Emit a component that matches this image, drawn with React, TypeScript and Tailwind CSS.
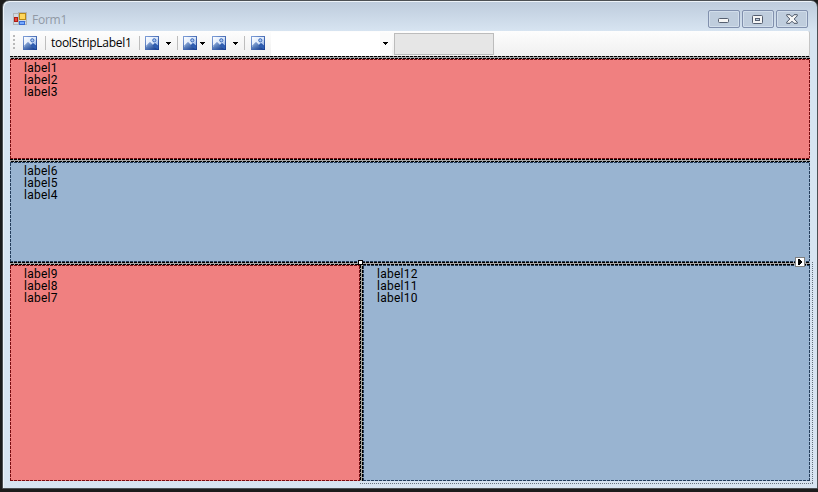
import React from "react";

const H_DASH = "h-px shrink-0 bg-[repeating-linear-gradient(90deg,var(--dash)_0_3px,transparent_3px_4px)]";
const V_DASH = "w-px shrink-0 bg-[repeating-linear-gradient(180deg,var(--dash)_0_3px,transparent_3px_4px)]";
const RED = "bg-[#f08080] [--dash:#780c10]";
const BLUE = "bg-[#99b4d1] [--dash:#243d5b]";

function PictureIcon() {
  return (
    <svg width="14" height="14" viewBox="0 0 14 14" className="mb-px shrink-0">
      <defs>
        <linearGradient id="sky" x1="0" y1="0" x2="1" y2="1">
          <stop offset="0" stopColor="#fff" />
          <stop offset=".5" stopColor="#dbe8fb" />
          <stop offset="1" stopColor="#5f8cd6" />
        </linearGradient>
        <linearGradient id="hill" x1="0" y1="0" x2="1" y2="1">
          <stop offset="0" stopColor="#8fb2e0" />
          <stop offset="1" stopColor="#123a8c" />
        </linearGradient>
        <linearGradient id="frame" x1="0" y1="0" x2="1" y2="1">
          <stop offset="0" stopColor="#7f9fd8" />
          <stop offset="1" stopColor="#173f94" />
        </linearGradient>
      </defs>
      <rect x=".5" y=".5" width="13" height="13" fill="url(#sky)" stroke="url(#frame)" />
      <path d="M7 10l3-3 3 3v3H6z" fill="#2f5fb4" />
      <path d="M1 11l4-4 7 6H1z" fill="url(#hill)" />
      <path d="M1 10.5l4-4 4.5 4.500M8 9.500l2-1.800 3 2.300" fill="none" stroke="#2c56a6" strokeWidth=".8" />
      <circle cx="9.3" cy="4.3" r="1.6" fill="#a9c6f2" stroke="#3c69b8" />
    </svg>
  );
}

function Arrow({ className = "" }: { className?: string }) {
  return (
    <svg width="5" height="3" viewBox="0 0 5 3" shapeRendering="crispEdges" className={"shrink-0 " + className}>
      <path d="M0 0h5v1H0zM1 1h3v1H1zM2 2h1v1H2z" />
    </svg>
  );
}

function Separator({ className = "" }: { className?: string }) {
  return <div className={"mb-px h-[14px] w-px shrink-0 bg-[#bdbdbd] " + className} />;
}

function Panel({ tone, labels, className = "" }: { tone: string; labels: string[]; className?: string }) {
  return (
    <div className={"flex min-w-0 flex-col " + tone + " " + className}>
      <div className={H_DASH} />
      <div className="flex min-h-0 grow">
        <div className={V_DASH} />
        <div className="grow pl-[13px] pt-[2px] font-['Roboto',sans-serif] text-[12px] leading-[12px] tracking-[0.25px] text-black">
          {labels.map((l) => <div key={l}>{l}</div>)}
        </div>
        <div className={V_DASH} />
      </div>
      <div className={H_DASH} />
    </div>
  );
}

function HatchLine() {
  return (
    <div className="h-[3px] shrink-0 bg-[#a8a8aa]">
      <div className="h-px bg-[repeating-linear-gradient(90deg,#000_0_3px,#a8a8aa_3px_4px)]" />
      <div className="h-px" />
      <div className="h-px bg-[repeating-linear-gradient(90deg,#a8a8aa_0_1px,#000_1px_4px)]" />
    </div>
  );
}

function WindowButton({ children }: { children: React.ReactNode }) {
  return (
    <div className="flex h-[18px] w-8 items-center justify-center rounded-[2px] border border-[#8190ad] bg-[#bfcddd] shadow-[inset_0_0_0_1px_#d2deeb]">
      {children}
    </div>
  );
}

export default function App() {
  return (
    <div className="h-[492px] w-[818px] overflow-hidden bg-[#1c1c1c] pl-[2px] pt-0 font-['Liberation_Sans',sans-serif]">
      <div className="relative flex h-[489px] w-[816px] flex-col rounded-t-[7px] border border-[#4c5054] bg-[linear-gradient(180deg,#bdcbdc_0px,#d7e4f1_30px)] px-[7px] pb-[7px] shadow-[inset_1px_1px_0_#edf3f9]">
        <div className="flex h-[30px] shrink-0">
          <svg width="14" height="14" viewBox="0 0 14 14" className="ml-[3px] mt-[11px] shrink-0" shapeRendering="crispEdges">
            <path d="M.5 1.5h5v11h-5zM5.5.5h8v12h-8zM.5 9.5h13" fill="#d3dae2" stroke="#b0b4b8" />
            <rect x="1.500" y="5.500" width="3" height="4" fill="#e4483a" stroke="#b01c14" />
            <rect x="6.5" y="1.5" width="6" height="6" fill="#ffd65a" stroke="#b98a16" />
            <rect x="6.5" y="9.5" width="5" height="3" fill="#77aaff" stroke="#376bd2" />
          </svg>
          <div className="ml-[5px] mt-[11px] font-['Open_Sans',sans-serif] text-[12px] leading-[16px] tracking-[-0.25px] text-[#9199a5]">Form1</div>
          <div className="ml-auto mr-[2px] mt-[9px] flex gap-[2px]">
            <WindowButton>
              <svg width="11" height="5" className="mt-[3px] mr-px" viewBox="0 0 11 5"><rect x=".5" y=".5" width="10" height="4" rx="1" fill="#f5f5f5" stroke="#555f70" /></svg>
            </WindowButton>
            <WindowButton>
              <svg width="11" height="9" className="mr-px" viewBox="0 0 11 9"><rect x=".5" y=".5" width="10" height="8" rx="1" fill="#f5f5f5" stroke="#555f70" /><rect x="3.5" y="3.5" width="4" height="2" fill="#bfcddd" stroke="#555f70" /></svg>
            </WindowButton>
            <WindowButton>
              <svg width="12" height="10" className="mr-px mb-px" viewBox="0 0 12 10"><path d="M.7.7H4L6 2.8 8 .7h3.3v1.1L8.2 5l3.1 3.2v1.1H8L6 7.2 4 9.3H.7V8.2L3.8 5 .7 1.8z" fill="#f5f5f5" stroke="#4b5566" /></svg>
            </WindowButton>
          </div>
        </div>

        <div className="flex w-[800px] grow flex-col">
          <div className="flex h-[25px] shrink-0 items-center rounded-r-[2px] border-r border-[#c5c5c5] bg-gradient-to-b from-[#fdfdfd] to-[#f0f0f0]">
            <div className="mb-[3px] ml-[3px] flex flex-col gap-[2px]">
              {[0, 1, 2, 3].map((i) => <div key={i} className="h-[2px] w-[2px] bg-[#b9b9b9]" />)}
            </div>
            <div className="ml-[8px] flex"><PictureIcon /></div>
            <Separator className="ml-[8px]" />
            <div className="mb-[2px] ml-[5px] w-[93px] whitespace-nowrap font-['Open_Sans',sans-serif] text-[12px] leading-[16px] tracking-[-0.28px] text-black">toolStripLabel1</div>
            <Separator className="-ml-[5px]" />
            <div className="ml-[5px] flex"><PictureIcon /></div>
            <Arrow className="ml-[7px]" />
            <Separator className="ml-[6px]" />
            <div className="ml-[5px] flex"><PictureIcon /></div>
            <Arrow className="ml-[3px]" />
            <div className="ml-[7px] flex"><PictureIcon /></div>
            <Arrow className="ml-[7px]" />
            <Separator className="ml-[6px]" />
            <div className="ml-[6px] flex"><PictureIcon /></div>
            <div className="ml-[6px] h-6 w-[109px] bg-white" />
            <div className="flex h-[22px] w-[12px] items-center bg-[#fbfbfb] pl-[3px]"><Arrow /></div>
            <div className="ml-[2px] h-[22px] w-[100px] border border-[#bcbcbc] bg-[#e6e6e6]" />
          </div>

          <HatchLine />
          <Panel tone={RED} className="h-[100px] shrink-0" labels={["label1", "label2", "label3"]} />
          <HatchLine />
          <Panel tone={BLUE} className="h-[100px] shrink-0" labels={["label6", "label5", "label4"]} />
          <HatchLine />
          <div className="flex min-h-0 grow">
            <Panel tone={RED} className="w-[350px] shrink-0" labels={["label9", "label8", "label7"]} />
            <div className="flex w-[3px] shrink-0 bg-[#a8a89f]">
              <div className="w-px bg-[repeating-linear-gradient(180deg,#000_0_3px,#a8a89f_3px_4px)]" />
              <div className="w-px" />
              <div className="w-px bg-[repeating-linear-gradient(180deg,#a8a89f_0_1px,#000_1px_4px)]" />
            </div>
            <Panel tone={BLUE} className="grow" labels={["label12", "label11", "label10"]} />
          </div>
        </div>

        <div className="absolute left-[357px] top-[261px] h-[222px] w-[453px]">
          <div className="absolute right-0 top-0 h-full w-px bg-[repeating-linear-gradient(180deg,#66717d_0_1px,transparent_1px_2px)]" />
          <div className="absolute bottom-0 left-0 h-px w-full bg-[repeating-linear-gradient(90deg,#66717d_0_1px,transparent_1px_2px)]" />
        </div>
        <div className="absolute left-[355px] top-[259px] h-[5px] w-[5px] border border-black bg-white" />
        <div className="absolute left-[792px] top-[256px] flex h-[10px] w-[10px] items-center justify-center border border-[#808080] bg-white">
          <svg width="4" height="6" viewBox="0 0 4 6" shapeRendering="crispEdges"><path d="M0 0h2v1h1v1h1v2H3v1H2v1H0z" /></svg>
        </div>
      </div>
    </div>
  );
}
